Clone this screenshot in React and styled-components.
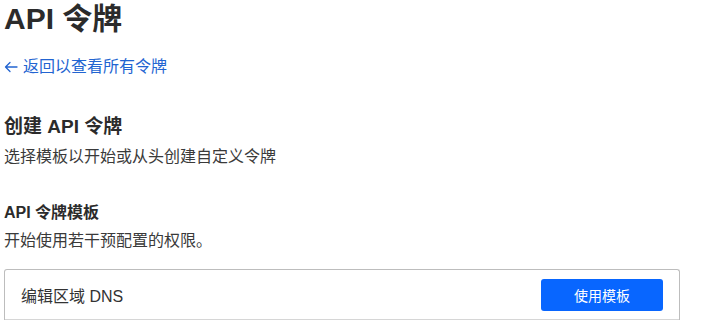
import React from "react";
import styled, { createGlobalStyle } from "styled-components";

const Global = createGlobalStyle`
  html, body { margin: 0; padding: 0; background: #fff; }
  body {
    font-family: "Liberation Sans", "Noto Sans CJK SC", sans-serif;
    color: #313131;
    -webkit-font-smoothing: antialiased;
  }
`;

const Page = styled.main`
  padding: 0 0 0 4px;
  width: 676px;
`;

const Title = styled.h1`
  margin: 0;
  font-size: 30px;
  line-height: 38px;
  font-weight: 700;
  color: #2b2b2b;
`;

const BackLink = styled.a`
  display: flex;
  align-items: center;
  gap: 5px;
  margin-top: 17px;
  font-size: 16px;
  line-height: 24px;
  color: #2264d1;
  text-decoration: none;
`;

const Section = styled.section`
  margin-top: ${(p) => p.$top}px;
`;

const H2 = styled.h2`
  margin: 0;
  font-size: 19px;
  line-height: 28px;
  font-weight: 600;
  color: #2b2b2b;
`;

const H3 = styled.h3`
  margin: 0;
  font-size: 16px;
  line-height: 24px;
  font-weight: 700;
  color: #2b2b2b;
`;

const Text = styled.p`
  margin: ${(p) => p.$top}px 0 0;
  font-size: 16px;
  line-height: 24px;
  color: #3a3a3a;
`;

const Card = styled.div`
  margin-top: 16px;
  border: 1px solid #bdbdbd;
  border-bottom: none;
  border-radius: 3px 3px 0 0;
`;

const Row = styled.div`
  display: flex;
  align-items: center;
  justify-content: space-between;
  height: 49px;
  padding: 0 16px;
  border-bottom: 1px solid #d6d6d6;
  font-size: 16px;
  color: #333;
`;

const Button = styled.button`
  width: 122px;
  height: 32px;
  border: none;
  border-radius: 3px;
  background: #0866ff;
  color: #fff;
  font-family: inherit;
  font-size: 14px;
  cursor: pointer;
`;

const Arrow = () => (
  <svg width="14" height="12" viewBox="0 0 14 12" fill="none" stroke="currentColor" strokeWidth="1.3" strokeLinecap="round" strokeLinejoin="round">
    <path d="M13 6H1.5M6 1.5L1.5 6L6 10.5" />
  </svg>
);

export default function App() {
  return (
    <>
      <Global />
      <Page>
        <Title>API 令牌</Title>
        <BackLink href="#">
          <Arrow />
          返回以查看所有令牌
        </BackLink>
        <Section $top={34}>
          <H2>创建 API 令牌</H2>
          <Text $top={4}>选择模板以开始或从头创建自定义令牌</Text>
        </Section>
        <Section $top={32}>
          <H3>API 令牌模板</H3>
          <Text $top={4}>开始使用若干预配置的权限。</Text>
          <Card>
            <Row>
              <span>编辑区域 DNS</span>
              <Button>使用模板</Button>
            </Row>
          </Card>
        </Section>
      </Page>
    </>
  );
}
